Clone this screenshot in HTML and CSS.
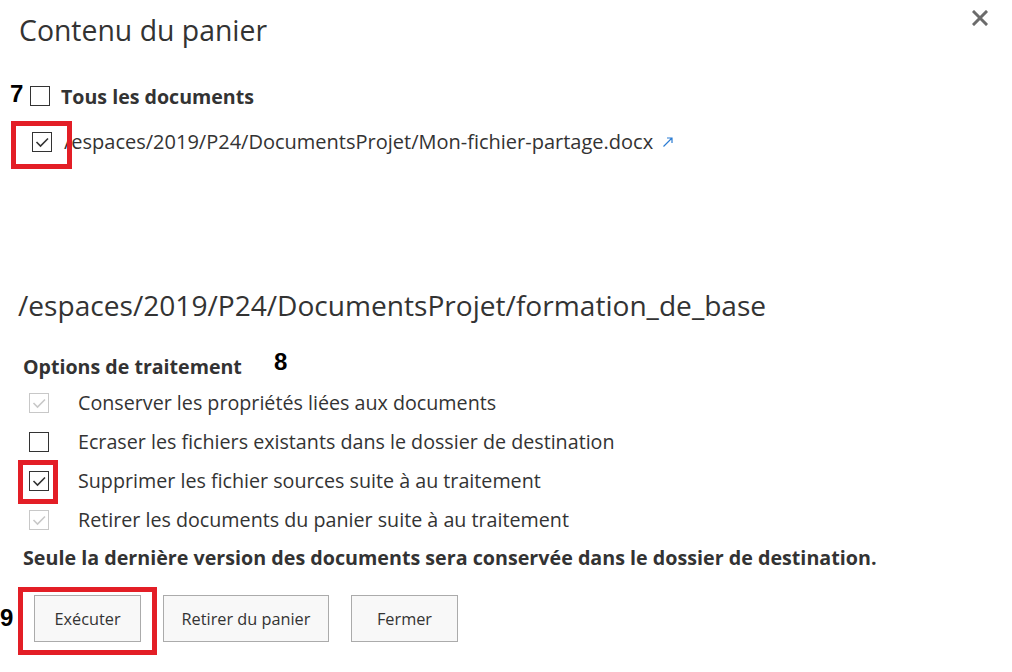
FILE: index.html
```html
<!DOCTYPE html>
<html lang="fr">
<head>
<meta charset="utf-8">
<title>Contenu du panier</title>
<link rel="stylesheet" href="styles.css">
</head>
<body>
<div class="dialog">
  <header class="head">
    <h1 class="title">Contenu du panier</h1>
    <button class="close" aria-label="Fermer">
      <svg width="16" height="16" viewBox="0 0 16 16"><path d="M2 2L14 14M14 2L2 14" stroke="#6b6b6b" stroke-width="3" stroke-linecap="square"/></svg>
    </button>
  </header>

  <div class="docs">
    <div class="row all">
      <span class="anno anno-7">7</span>
      <span class="cb"></span>
      <span class="all-label">Tous les documents</span>
    </div>
    <div class="row file">
      <span class="cb mark-wrap">
        <svg viewBox="0 0 18 18" width="18" height="18"><path d="M3.5 9L7.5 13L15 5.5" fill="none" stroke="#333" stroke-width="1.6"/></svg>
        <span class="redbox rb-file"></span>
      </span>
      <span class="file-path">/espaces/2019/P24/DocumentsProjet/Mon-fichier-partage.docx</span>
      <svg class="ext" width="12" height="12" viewBox="0 0 12 12"><path d="M1.5 10.5L10 2M5 2H10V7" fill="none" stroke="#2b7cd3" stroke-width="1.2"/></svg>
    </div>
  </div>

  <h2 class="dest">/espaces/2019/P24/DocumentsProjet/formation_de_base</h2>

  <section class="options">
    <div class="opt-head">
      <h3 class="opt-title">Options de traitement</h3>
      <span class="anno anno-8">8</span>
    </div>
    <div class="opt">
      <span class="cb disabled">
        <svg viewBox="0 0 18 18" width="18" height="18"><path d="M3.5 9L7.5 13L15 5.5" fill="none" stroke="#c8c8c8" stroke-width="1.6"/></svg>
      </span>
      <span class="opt-label">Conserver les propriétés liées aux documents</span>
    </div>
    <div class="opt">
      <span class="cb"></span>
      <span class="opt-label">Ecraser les fichiers existants dans le dossier de destination</span>
    </div>
    <div class="opt">
      <span class="cb mark-wrap">
        <svg viewBox="0 0 18 18" width="18" height="18"><path d="M3.5 9L7.5 13L15 5.5" fill="none" stroke="#333" stroke-width="1.6"/></svg>
        <span class="redbox rb-opt"></span>
      </span>
      <span class="opt-label">Supprimer les fichier sources suite à au traitement</span>
    </div>
    <div class="opt">
      <span class="cb disabled">
        <svg viewBox="0 0 18 18" width="18" height="18"><path d="M3.5 9L7.5 13L15 5.5" fill="none" stroke="#c8c8c8" stroke-width="1.6"/></svg>
      </span>
      <span class="opt-label">Retirer les documents du panier suite à au traitement</span>
    </div>
  </section>

  <p class="note">Seule la dernière version des documents sera conservée dans le dossier de destination.</p>

  <div class="actions">
    <span class="btn-wrap">
      <span class="anno anno-9">9</span>
      <button class="btn">Exécuter</button>
      <span class="redbox rb-btn"></span>
    </span>
    <button class="btn btn-wide">Retirer du panier</button>
    <button class="btn btn-close">Fermer</button>
  </div>
</div>
</body>
</html>
```

FILE: styles.css
```css
* { box-sizing: border-box; }
html, body { margin: 0; padding: 0; background: #fff; }
body {
  font-family: "Open Sans", "Noto Sans", sans-serif;
  color: #333;
  width: 1012px;
  height: 672px;
  overflow: hidden;
}
.dialog {
  padding: 0 0 0 18px;
  position: relative;
}
.head {
  display: flex;
  justify-content: space-between;
  align-items: flex-start;
  height: 66px;
}
.title {
  margin: 10px 0 0 1px;
  font-size: 28.4px;
  font-weight: 400;
  line-height: 40px;
  color: #333;
}
.close {
  border: 0;
  background: none;
  padding: 0;
  margin: 10px 24px 0 0;
  width: 16px;
  height: 16px;
  display: flex;
}
.docs { display: flex; flex-direction: column; }
.row { display: flex; align-items: center; position: relative; }
.row.all { height: 20px; margin-top: 20px; padding-left: 12px; }
.row.file { margin-top: 25px; height: 21px; padding-left: 14px; }
.cb {
  width: 20px;
  height: 20px;
  border: 1px solid #333;
  background: #fff;
  flex: none;
  display: flex;
  align-items: center;
  justify-content: center;
  position: relative;
}
.cb.disabled { border-color: #c8c8c8; }
.anno {
  position: absolute;
  font-family: "Liberation Sans", Arial, sans-serif;
  font-weight: 700;
  color: #000;
  font-size: 24px;
  line-height: 24px;
}
.anno-7 { left: -8px; top: -4px; }
.anno-8 { left: 251px; top: -2px; }
.anno-9 { left: -34px; top: 11px; }
.all-label {
  margin-left: 11px;
  font-weight: 700;
  font-size: 19.6px;
  color: #333;
}
.file-path {
  margin-left: 12px;
  font-size: 20px;
  color: #333;
}
.ext { margin-left: 9px; margin-top: 1px; }
.redbox {
  position: absolute;
  border: 5px solid #e31e26;
  pointer-events: none;
}
.rb-file { left: -22px; top: -12px; width: 61px; height: 48px; }
.rb-opt { left: -12px; top: -12px; width: 40px; height: 44px; }
.rb-btn { left: -16px; top: -8px; width: 139px; height: 68px; }
.dest {
  margin: 135px 0 0 0;
  font-size: 28.1px;
  font-weight: 400;
  line-height: 36px;
  color: #333;
}
.options { margin-top: 29px; padding-left: 5px; }
.opt-head { position: relative; height: 28px; display: flex; align-items: center; }
.opt-title {
  margin: 0;
  font-size: 19.6px;
  font-weight: 700;
  color: #333;
}
.opt {
  display: flex;
  align-items: center;
  height: 39px;
  padding-left: 6px;
}
.opt-head + .opt { margin-top: 3px; }
.opt-label {
  margin-left: 29px;
  font-size: 19.7px;
  color: #333;
}
.note {
  margin: 7px 0 0 5px;
  font-size: 19.7px;
  font-weight: 700;
  color: #333;
  line-height: 24px;
}
.actions {
  display: flex;
  align-items: center;
  gap: 22px;
  margin-top: 25px;
  padding-left: 16px;
}
.btn-wrap { position: relative; display: flex; }
.btn {
  font-family: "Open Sans", "Noto Sans", sans-serif;
  font-size: 16.3px;
  color: #333;
  background: #f8f8f8;
  border: 1px solid #ababab;
  height: 47px;
  width: 107px;
  padding: 0;
}
.btn-wide { width: 166px; }
.btn-close { width: 107px; }
```
